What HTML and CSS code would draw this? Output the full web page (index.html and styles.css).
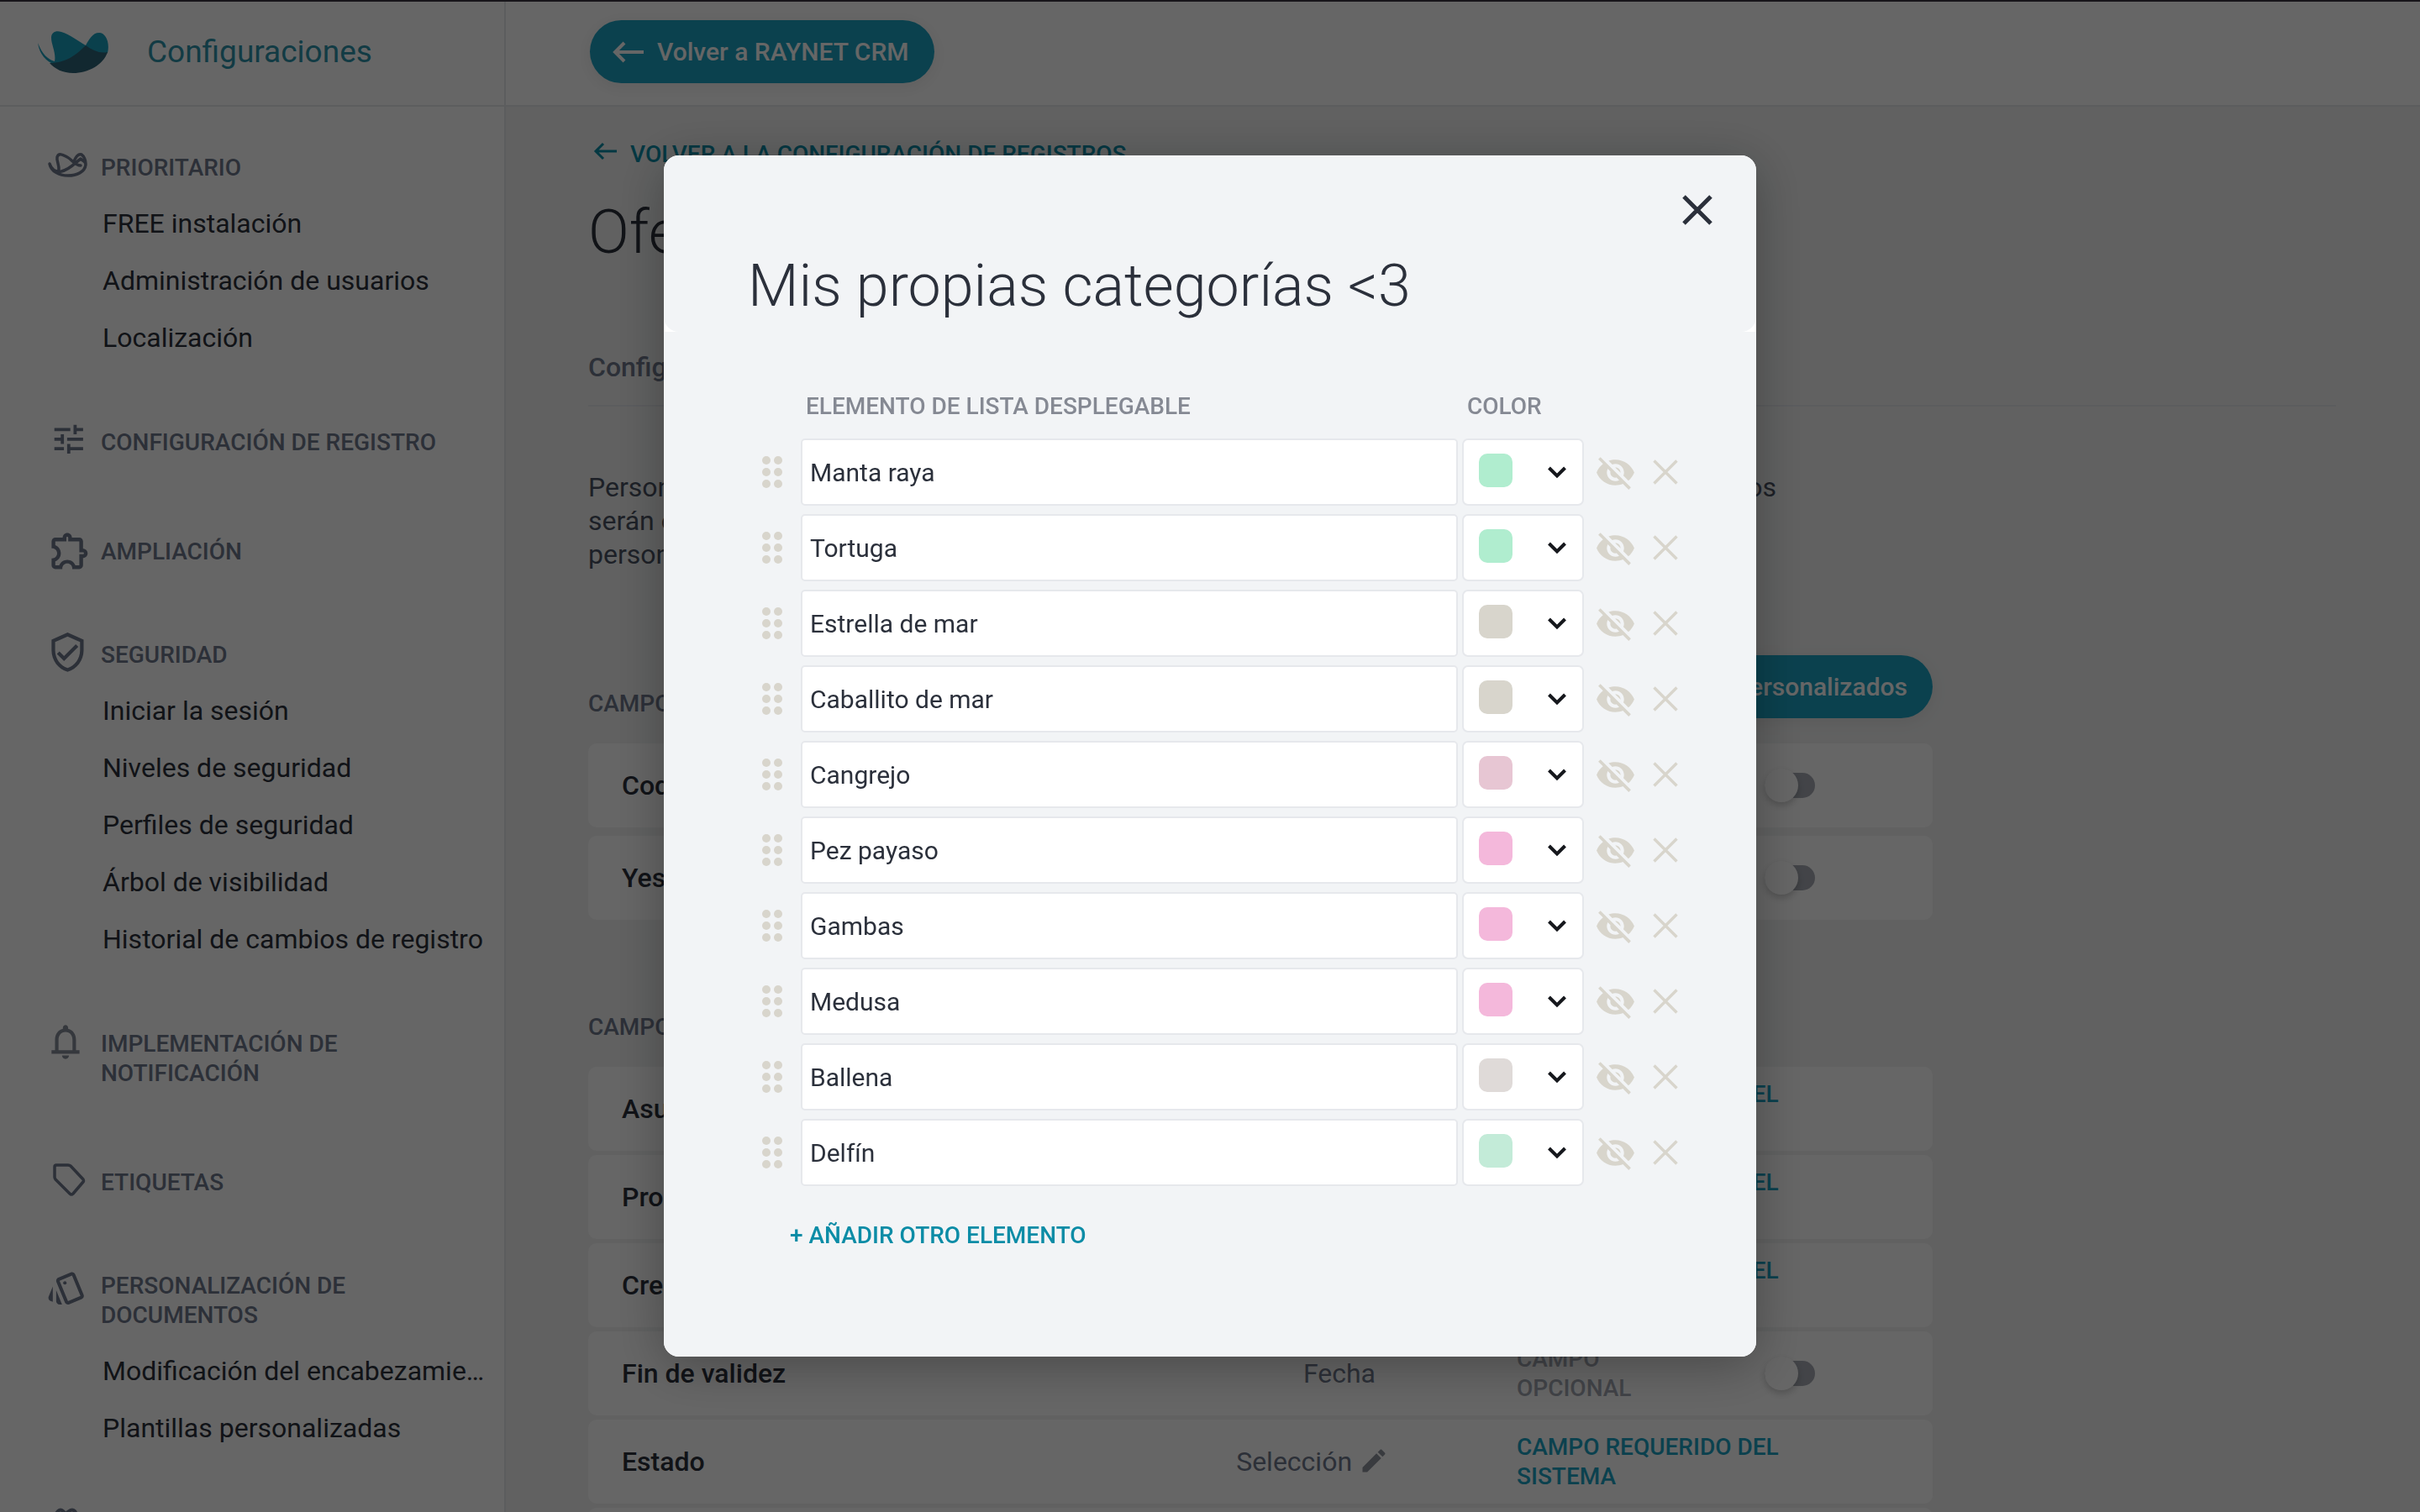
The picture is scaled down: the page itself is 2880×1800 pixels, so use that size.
FILE: index.html
```html
<!DOCTYPE html>
<html lang="es">
<head>
    <meta charset="UTF-8">
    <meta name="viewport" content="width=device-width, initial-scale=1.0">
    <title>Configuraciones - RAYNET CRM</title>
    <link rel="stylesheet" href="styles.css">
</head>
<body>
    <!-- Shared icons -->
    <svg class="sprite" aria-hidden="true">
        <symbol id="icon-drag" viewBox="0 0 24 38">
            <circle cx="5" cy="5" r="5"/><circle cx="19" cy="5" r="5"/>
            <circle cx="5" cy="19" r="5"/><circle cx="19" cy="19" r="5"/>
            <circle cx="5" cy="33" r="5"/><circle cx="19" cy="33" r="5"/>
        </symbol>
        <symbol id="icon-chevron" viewBox="0 0 24 16">
            <path d="M2.500 3l9.500 9.500L21.500 3" fill="none" stroke="currentColor" stroke-width="4"/>
        </symbol>
        <symbol id="icon-hide" viewBox="0 0 24 24">
            <path d="M12 7c2.760 0 5 2.240 5 5 0 .65-.13 1.260-.36 1.830l2.920 2.920c1.510-1.260 2.700-2.890 3.430-4.750-1.730-4.390-6-7.500-11-7.500-1.400 0-2.740.25-3.980.7l2.160 2.160C10.740 7.130 11.350 7 12 7zM2 4.270l2.280 2.280.46.46C3.080 8.300 1.780 10.020 1 12c1.730 4.390 6 7.500 11 7.500 1.550 0 3.030-.3 4.380-.84l.42.42L19.730 22 21 20.730 3.270 3 2 4.270zM7.530 9.800l1.550 1.550c-.05.21-.08.43-.08.65 0 1.660 1.340 3 3 3 .22 0 .44-.03.65-.08l1.550 1.550c-.67.33-1.410.53-2.200.53-2.760 0-5-2.240-5-5 0-.79.2-1.530.53-2.200zm4.310-.78l3.150 3.150.02-.16c0-1.660-1.340-3-3-3l-.17.01z"/>
        </symbol>
        <symbol id="icon-close" viewBox="0 0 30 30">
            <path d="M1.500 1.500l27 27M28.500 1.500l-27 27" fill="none" stroke="currentColor" stroke-width="3.500"/>
        </symbol>
    </svg>

    <div class="app">
        <aside class="sidebar">
            <div class="sidebar-header">
                <svg class="logo" viewBox="0 0 84 50" aria-hidden="true">
                    <path fill="#1ba0bf" d="M0 14C5 27 12 34 20 36C22 26 16 16 16 8C16 1 22-1 28 1C38 4 48 12 57 17C61 10 65 2 73 2C81 2 86 14 83 26L60 40L20 40C10 36 2 28 0 14Z"/>
                    <path fill="#2f6478" d="M14 38C34 38 46 28 57 17C65 23 74 27 83 25C78 40 60 50 42 50C30 50 20 45 14 38Z"/>
                </svg>
                <span class="sidebar-title">Configuraciones</span>
            </div>
            <nav class="sidebar-nav">
                <section class="nav-group">
                    <h2 class="nav-heading">
                        <svg viewBox="0 0 50 50"><path d="M4 23C7 31 12 33 18 32C28 30 34 22 41 17C45 21 47 20 47 24C46 33 36 37 26 37C15 37 6 32 4 23ZM15 32C16 24 12 20 13 15C15 9 21 13 25 15C31 18 34 25 41 25M33 20C36 13 39 11 42 12C45 14 47 19 47 23" fill="none" stroke="currentColor" stroke-width="3.500" stroke-linecap="round" stroke-linejoin="round"/></svg>
                        <span>PRIORITARIO</span>
                    </h2>
                    <ul>
                        <li><a href="#">FREE instalación</a></li>
                        <li><a href="#">Administración de usuarios</a></li>
                        <li><a href="#">Localización</a></li>
                    </ul>
                </section>
                <section class="nav-group nav-group-wide">
                    <h2 class="nav-heading">
                        <svg viewBox="0 0 50 50"><path transform="translate(4 1) scale(1.900)" d="M3 17v2h6v-2H3zM3 5v2h10V5H3zm10 16v-2h8v-2h-8v-2h-2v6h2zM7 9v2H3v2h4v2h2V9H7zm14 4v-2H11v2h10zm-6-4h2V7h4V5h-4V3h-2v6z"/></svg>
                        <span>CONFIGURACIÓN DE REGISTRO</span>
                    </h2>
                </section>
                <section class="nav-group">
                    <h2 class="nav-heading">
                        <svg viewBox="0 0 50 50"><path transform="translate(2 0) scale(2.200)" d="M10.500 4.500c.28 0 .5.22.5.5v2h6v6h2c.28 0 .5.22.5.5s-.22.5-.5.5h-2v6h-2.120c-.68-1.750-2.390-3-4.380-3s-3.700 1.250-4.380 3H4v-2.120c1.750-.68 3-2.390 3-4.380 0-1.990-1.240-3.700-2.990-4.380L4 7h6V5c0-.28.22-.5.5-.5m0-2C9.120 2.500 8 3.620 8 5H4c-1.100 0-1.990.9-1.990 2v3.800h.29c1.490 0 2.700 1.210 2.700 2.700s-1.210 2.700-2.700 2.700H2V20c0 1.100.9 2 2 2h3.800v-.3c0-1.490 1.210-2.700 2.700-2.700s2.700 1.210 2.700 2.700v.3H17c1.100 0 2-.9 2-2v-4c1.380 0 2.500-1.120 2.500-2.500S20.380 11 19 11V7c0-1.100-.9-2-2-2h-4c0-1.380-1.120-2.500-2.500-2.500z"/></svg>
                        <span>AMPLIACIÓN</span>
                    </h2>
                </section>
                <section class="nav-group">
                    <h2 class="nav-heading">
                        <svg viewBox="0 0 50 50"><path transform="translate(0 -1) scale(2.120)" d="M12 1L3 5v6c0 5.550 3.840 10.740 9 12 5.160-1.260 9-6.450 9-12V5l-9-4zm7 10c0 4.520-2.980 8.690-7 9.930-4.020-1.240-7-5.410-7-9.930V6.300l7-3.110 7 3.110V11zm-11.590.59L6 13l4 4 8-8-1.410-1.420L10 14.170z"/></svg>
                        <span>SEGURIDAD</span>
                    </h2>
                    <ul>
                        <li><a href="#">Iniciar la sesión</a></li>
                        <li><a href="#">Niveles de seguridad</a></li>
                        <li><a href="#">Perfiles de seguridad</a></li>
                        <li><a href="#">Árbol de visibilidad</a></li>
                        <li><a href="#">Historial de cambios de registro</a></li>
                    </ul>
                </section>
                <section class="nav-group nav-group-wide">
                    <h2 class="nav-heading">
                        <svg class="icon-light" viewBox="0 0 50 50"><path transform="translate(-2 0) scale(2.080)" d="M12 22c1.100 0 2-.9 2-2h-4c0 1.100.9 2 2 2zm6-6v-5c0-3.070-1.630-5.640-4.500-6.320V4c0-.83-.67-1.500-1.500-1.500s-1.500.67-1.500 1.500v.68C7.640 5.360 6 7.920 6 11v6H4v2h16v-2h-2v-1zm-2 1H8v-6c0-2.480 1.510-4.500 4-4.500s4 2.020 4 4.500v6z"/></svg>
                        <span>IMPLEMENTACIÓN DE NOTIFICACIÓN</span>
                    </h2>
                </section>
                <section class="nav-group">
                    <h2 class="nav-heading">
                        <svg viewBox="0 0 50 50"><path d="M12 7H26Q28 7 29 8L44 24Q45 26 44 27L32 41Q30 43 28 41L11 24Q10 23 10 21V9Q10 7 12 7Z" fill="none" stroke="currentColor" stroke-width="3.500" stroke-linejoin="round"/></svg>
                        <span>ETIQUETAS</span>
                    </h2>
                </section>
                <section class="nav-group">
                    <h2 class="nav-heading">
                        <svg viewBox="0 0 50 50"><g transform="translate(0 6) scale(2.020)"><path d="M2.530 19.650l1.340.56v-9.030l-2.430 5.860c-.41 1.020.08 2.190 1.090 2.610zm19.500-3.700L17.070 3.980c-.31-.75-1.040-1.210-1.810-1.230-.26 0-.53.04-.79.15L7.100 5.950c-.75.31-1.210 1.030-1.230 1.800-.01.27.04.54.15.8l4.960 11.970c.31.76 1.050 1.220 1.830 1.230.26 0 .52-.05.77-.15l7.360-3.050c1.020-.42 1.510-1.590 1.090-2.600zm-9.200 3.800L7.870 7.790l7.350-3.040h.01l4.950 11.950-7.350 3.050zM5.880 19.750c0 1.100.9 2 2 2h1.450l-3.450-8.340v6.340z"/><circle cx="11" cy="9" r="1"/></g></svg>
                        <span>PERSONALIZACIÓN DE DOCUMENTOS</span>
                    </h2>
                    <ul>
                        <li><a href="#">Modificación del encabezamiento</a></li>
                        <li><a href="#">Plantillas personalizadas</a></li>
                    </ul>
                </section>
                <section class="nav-group">
                    <h2 class="nav-heading">
                        <svg viewBox="0 0 50 50"><path d="M4 14L14 2Q17-1 20 2L23 5L27 2Q31-1 34 2L42 14M16 8L23 5L30 12" fill="none" stroke="currentColor" stroke-width="4"/></svg>
                    </h2>
                </section>
            </nav>
        </aside>

        <main class="main">
            <header class="topbar">
                <button type="button" class="btn">
                    <svg viewBox="0 0 38 26" aria-hidden="true"><path d="M38 13H4M15 2L4 13L15 24" fill="none" stroke="currentColor" stroke-width="4"/></svg>
                    Volver a RAYNET CRM
                </button>
            </header>

            <div class="content">
                <a href="#" class="back-link">
                    <svg viewBox="0 0 28 22" aria-hidden="true"><path d="M28 11H3M12 2L3 11L12 20" fill="none" stroke="currentColor" stroke-width="3"/></svg>
                    VOLVER A LA CONFIGURACIÓN DE REGISTROS
                </a>
                <h1>Ofertas</h1>
                <div class="tabs"><a href="#">Configuración</a></div>
                <p class="intro">
                    Personalice los campos según las necesidades de su empresa. Los campos que aquí haya elegidos<br>
                    serán obligatorios al crear un registro nuevo. También puede crear sus propios campos<br>
                    personalizados.
                </p>

                <div class="section-head">
                    <h3>CAMPOS PERSONALIZADOS</h3>
                    <button type="button" class="btn">Gestionar campos personalizados</button>
                </div>
                <table class="fields fields-custom">
                    <tbody>
                        <tr>
                            <th scope="row">Codigo</th>
                            <td class="type"></td>
                            <td class="status"></td>
                            <td><input type="checkbox" class="toggle" aria-label="Codigo"></td>
                        </tr>
                        <tr>
                            <th scope="row">Yes/No</th>
                            <td class="type"></td>
                            <td class="status"></td>
                            <td><input type="checkbox" class="toggle" aria-label="Yes/No"></td>
                        </tr>
                    </tbody>
                </table>

                <div class="section-head section-head-next">
                    <h3>CAMPOS ESTÁNDAR</h3>
                </div>
                <table class="fields">
                    <tbody>
                        <tr>
                            <th scope="row">Asunto</th>
                            <td class="type"><span>Texto</span></td>
                            <td class="status required">CAMPO REQUERIDO DEL<br>SISTEMA</td>
                            <td></td>
                        </tr>
                        <tr>
                            <th scope="row">Propietario</th>
                            <td class="type"><span>Usuario</span></td>
                            <td class="status required">CAMPO REQUERIDO DEL<br>SISTEMA</td>
                            <td></td>
                        </tr>
                        <tr>
                            <th scope="row">Creado</th>
                            <td class="type"><span>Fecha</span></td>
                            <td class="status required">CAMPO REQUERIDO DEL<br>SISTEMA</td>
                            <td></td>
                        </tr>
                        <tr>
                            <th scope="row">Fin de validez</th>
                            <td class="type"><span>Fecha</span></td>
                            <td class="status">CAMPO<br>OPCIONAL</td>
                            <td><input type="checkbox" class="toggle" aria-label="Fin de validez"></td>
                        </tr>
                        <tr>
                            <th scope="row">Estado</th>
                            <td class="type">Selección <svg viewBox="0 0 24 24" aria-hidden="true"><path d="M3 17.250V21h3.750L17.810 9.940l-3.750-3.750L3 17.250zM20.710 7.040c.39-.39.39-1.020 0-1.410l-2.340-2.340c-.39-.39-1.020-.39-1.410 0l-1.830 1.830 3.750 3.750 1.830-1.830z"/></svg></td>
                            <td class="status required">CAMPO REQUERIDO DEL<br>SISTEMA</td>
                            <td></td>
                        </tr>
                        <tr>
                            <th scope="row"></th>
                            <td class="type"></td>
                            <td class="status"></td>
                            <td></td>
                        </tr>
                    </tbody>
                </table>
            </div>
        </main>
    </div>

    <div class="overlay">
        <div class="modal" role="dialog" aria-modal="true" aria-labelledby="modalTitle">
            <div class="modal-header">
                <button type="button" class="modal-close" aria-label="Cerrar">
                    <svg viewBox="0 0 36 36"><path d="M2 2l32 32M34 2L2 34" fill="none" stroke="currentColor" stroke-width="5"/></svg>
                </button>
                <h2 id="modalTitle">Mis propias categorías &lt;3</h2>
            </div>
            <form class="modal-body">
                <div class="item-row item-labels">
                    <span></span>
                    <span id="labelItem" class="label-item">ELEMENTO DE LISTA DESPLEGABLE</span>
                    <span id="labelColor" class="label-color">COLOR</span>
                </div>
                <div class="item-row">
                    <svg class="drag"><use href="#icon-drag"/></svg>
                    <input type="text" value="Manta raya" aria-labelledby="labelItem">
                    <div class="color-picker"><span class="swatch mint"></span><svg><use href="#icon-chevron"/></svg><select aria-labelledby="labelColor"><option>Verde</option></select></div>
                    <button type="button" class="hide-btn" aria-label="Ocultar"><svg><use href="#icon-hide"/></svg></button>
                    <button type="button" class="remove-btn" aria-label="Eliminar"><svg><use href="#icon-close"/></svg></button>
                </div>
                <div class="item-row">
                    <svg class="drag"><use href="#icon-drag"/></svg>
                    <input type="text" value="Tortuga" aria-labelledby="labelItem">
                    <div class="color-picker"><span class="swatch mint"></span><svg><use href="#icon-chevron"/></svg><select aria-labelledby="labelColor"><option>Verde</option></select></div>
                    <button type="button" class="hide-btn" aria-label="Ocultar"><svg><use href="#icon-hide"/></svg></button>
                    <button type="button" class="remove-btn" aria-label="Eliminar"><svg><use href="#icon-close"/></svg></button>
                </div>
                <div class="item-row">
                    <svg class="drag"><use href="#icon-drag"/></svg>
                    <input type="text" value="Estrella de mar" aria-labelledby="labelItem">
                    <div class="color-picker"><span class="swatch sand"></span><svg><use href="#icon-chevron"/></svg><select aria-labelledby="labelColor"><option>Arena</option></select></div>
                    <button type="button" class="hide-btn" aria-label="Ocultar"><svg><use href="#icon-hide"/></svg></button>
                    <button type="button" class="remove-btn" aria-label="Eliminar"><svg><use href="#icon-close"/></svg></button>
                </div>
                <div class="item-row">
                    <svg class="drag"><use href="#icon-drag"/></svg>
                    <input type="text" value="Caballito de mar" aria-labelledby="labelItem">
                    <div class="color-picker"><span class="swatch sand"></span><svg><use href="#icon-chevron"/></svg><select aria-labelledby="labelColor"><option>Arena</option></select></div>
                    <button type="button" class="hide-btn" aria-label="Ocultar"><svg><use href="#icon-hide"/></svg></button>
                    <button type="button" class="remove-btn" aria-label="Eliminar"><svg><use href="#icon-close"/></svg></button>
                </div>
                <div class="item-row">
                    <svg class="drag"><use href="#icon-drag"/></svg>
                    <input type="text" value="Cangrejo" aria-labelledby="labelItem">
                    <div class="color-picker"><span class="swatch rose"></span><svg><use href="#icon-chevron"/></svg><select aria-labelledby="labelColor"><option>Rosa viejo</option></select></div>
                    <button type="button" class="hide-btn" aria-label="Ocultar"><svg><use href="#icon-hide"/></svg></button>
                    <button type="button" class="remove-btn" aria-label="Eliminar"><svg><use href="#icon-close"/></svg></button>
                </div>
                <div class="item-row">
                    <svg class="drag"><use href="#icon-drag"/></svg>
                    <input type="text" value="Pez payaso" aria-labelledby="labelItem">
                    <div class="color-picker"><span class="swatch pink"></span><svg><use href="#icon-chevron"/></svg><select aria-labelledby="labelColor"><option>Rosa</option></select></div>
                    <button type="button" class="hide-btn" aria-label="Ocultar"><svg><use href="#icon-hide"/></svg></button>
                    <button type="button" class="remove-btn" aria-label="Eliminar"><svg><use href="#icon-close"/></svg></button>
                </div>
                <div class="item-row">
                    <svg class="drag"><use href="#icon-drag"/></svg>
                    <input type="text" value="Gambas" aria-labelledby="labelItem">
                    <div class="color-picker"><span class="swatch pink"></span><svg><use href="#icon-chevron"/></svg><select aria-labelledby="labelColor"><option>Rosa</option></select></div>
                    <button type="button" class="hide-btn" aria-label="Ocultar"><svg><use href="#icon-hide"/></svg></button>
                    <button type="button" class="remove-btn" aria-label="Eliminar"><svg><use href="#icon-close"/></svg></button>
                </div>
                <div class="item-row">
                    <svg class="drag"><use href="#icon-drag"/></svg>
                    <input type="text" value="Medusa" aria-labelledby="labelItem">
                    <div class="color-picker"><span class="swatch pink"></span><svg><use href="#icon-chevron"/></svg><select aria-labelledby="labelColor"><option>Rosa</option></select></div>
                    <button type="button" class="hide-btn" aria-label="Ocultar"><svg><use href="#icon-hide"/></svg></button>
                    <button type="button" class="remove-btn" aria-label="Eliminar"><svg><use href="#icon-close"/></svg></button>
                </div>
                <div class="item-row">
                    <svg class="drag"><use href="#icon-drag"/></svg>
                    <input type="text" value="Ballena" aria-labelledby="labelItem">
                    <div class="color-picker"><span class="swatch stone"></span><svg><use href="#icon-chevron"/></svg><select aria-labelledby="labelColor"><option>Piedra</option></select></div>
                    <button type="button" class="hide-btn" aria-label="Ocultar"><svg><use href="#icon-hide"/></svg></button>
                    <button type="button" class="remove-btn" aria-label="Eliminar"><svg><use href="#icon-close"/></svg></button>
                </div>
                <div class="item-row">
                    <svg class="drag"><use href="#icon-drag"/></svg>
                    <input type="text" value="Delfín" aria-labelledby="labelItem">
                    <div class="color-picker"><span class="swatch seafoam"></span><svg><use href="#icon-chevron"/></svg><select aria-labelledby="labelColor"><option>Verde agua</option></select></div>
                    <button type="button" class="hide-btn" aria-label="Ocultar"><svg><use href="#icon-hide"/></svg></button>
                    <button type="button" class="remove-btn" aria-label="Eliminar"><svg><use href="#icon-close"/></svg></button>
                </div>
                <button type="button" class="add-item">+ AÑADIR OTRO ELEMENTO</button>
            </form>
        </div>
    </div>
</body>
</html>
```
FILE: styles.css
```css
:root {
    --primary: #1ca3c4;
    --link: #0b8ca6;
    --text: #2b303b;
    --text-soft: #4a5262;
    --heading: #6f788c;
    --muted: #a3a8b3;
    --icon: #d8d5cc;
    --border: #e6e8ec;
    --page: #f2f3f3;
    --panel: #f2f4f6;
}

* {
    box-sizing: border-box;
}

body {
    margin: 0;
    font-family: Roboto, "Liberation Sans", sans-serif;
    font-size: 32px;
    color: var(--text);
    background: #fff;
    border-top: 2px solid #3a3542;
    height: 100vh;
    overflow: hidden;
}

h1, h2, h3, p, ul {
    margin: 0;
    padding: 0;
}

ul {
    list-style: none;
}

a {
    color: inherit;
    text-decoration: none;
}

button {
    font-family: inherit;
    border: none;
    background: none;
    padding: 0;
    cursor: pointer;
}

svg {
    display: block;
    fill: currentColor;
    flex: none;
}

.sprite {
    display: none;
}

.app {
    display: grid;
    grid-template-columns: 602px 1fr;
    height: 100%;
}

/* Sidebar */
.sidebar {
    background: #fff;
    border-right: 2px solid var(--border);
    overflow: hidden;
}

.sidebar-header {
    display: flex;
    align-items: center;
    height: 125px;
    padding: 0 0 4px 45px;
    border-bottom: 2px solid var(--border);
}

.logo {
    width: 84px;
    height: 50px;
    margin-right: 46px;
}

.sidebar-title {
    font-size: 37px;
    color: #2f93ab;
}

.sidebar-nav {
    padding-top: 55px;
}

.nav-group {
    margin-bottom: 73px;
}

.nav-group-wide {
    margin-bottom: 80px;
}

.nav-heading {
    display: flex;
    gap: 15px;
    min-height: 50px;
    padding: 0 60px 15px 55px;
    font-size: 28px;
    line-height: 35px;
    font-weight: 500;
    color: var(--heading);
}

.nav-heading svg {
    width: 50px;
    height: 50px;
    margin: -10px 0 -15px;
    overflow: visible;
}

.nav-heading .icon-light {
    color: #868c98;
}

.nav-group li {
    padding: 0 10px 0 122px;
}

.nav-group li a {
    display: block;
    line-height: 68px;
    white-space: nowrap;
    overflow: hidden;
    text-overflow: ellipsis;
}

/* Main area */
.main {
    background: var(--page);
    overflow: hidden;
}

.topbar {
    display: flex;
    align-items: center;
    height: 125px;
    padding: 0 0 4px 100px;
    background: #fff;
    border-bottom: 2px solid var(--border);
}

.btn {
    display: flex;
    align-items: center;
    gap: 16px;
    height: 75px;
    padding: 0 30px 0 26px;
    border-radius: 38px;
    font-size: 30px;
    font-weight: 500;
    color: #fff;
    background: var(--primary);
    box-shadow: 0 4px 20px rgba(0, 0, 0, 0.08);
}

.btn svg {
    width: 38px;
    height: 26px;
}

.content {
    padding: 39px 100px 0 98px;
}

.back-link {
    display: flex;
    align-items: center;
    gap: 16px;
    padding-left: 6px;
    font-size: 28px;
    line-height: 35px;
    font-weight: 500;
    color: var(--link);
}

.back-link svg {
    width: 28px;
    height: 22px;
    margin-bottom: 8px;
}

h1 {
    margin-top: 34px;
    font-size: 72px;
    line-height: 84px;
    font-weight: 300;
}

.tabs {
    margin-top: 98px;
    padding-bottom: 25px;
    line-height: 40px;
    font-weight: 500;
    color: var(--heading);
    border-bottom: 2px solid var(--border);
}

.intro {
    margin-top: 76px;
    line-height: 40px;
    color: var(--text-soft);
}

.section-head {
    display: flex;
    align-items: flex-end;
    justify-content: space-between;
    max-width: 1600px;
    margin-top: 100px;
}

.section-head h3 {
    font-size: 28px;
    line-height: 35px;
    font-weight: 500;
    color: var(--heading);
}

.fields {
    width: 100%;
    max-width: 1600px;
    margin-top: 25px;
    table-layout: fixed;
    border-collapse: separate;
    border-spacing: 0 5px;
}

.fields-custom {
    margin-top: 20px;
    border-spacing: 0 10px;
}

.fields th,
.fields td {
    height: 100px;
    padding: 0;
    text-align: left;
    background: #fff;
}

.fields th {
    width: 600px;
    padding-left: 40px;
    font-weight: 500;
    border-radius: 10px 0 0 10px;
}

.fields td:last-child {
    border-radius: 0 10px 10px 0;
}

.fields .type {
    width: 505px;
    padding-right: 152px;
    text-align: right;
    color: var(--heading);
}

.type span {
    padding-right: 16px;
}

.type svg {
    display: inline-block;
    width: 36px;
    height: 36px;
    vertical-align: -6px;
    color: #8f949e;
}

.fields .status {
    width: 295px;
    font-size: 28px;
    line-height: 35px;
    font-weight: 500;
    white-space: nowrap;
    color: var(--muted);
}

.fields .status.required {
    color: var(--primary);
}

.toggle {
    appearance: none;
    display: block;
    position: relative;
    width: 60px;
    height: 30px;
    margin: 0;
    border-radius: 15px;
    background: #a7abb4;
}

.toggle::before {
    content: "";
    position: absolute;
    top: -5px;
    left: 0;
    width: 40px;
    height: 40px;
    border-radius: 50%;
    background: #fff;
    box-shadow: 0 4px 8px rgba(0, 0, 0, 0.2);
}

/* Modal */
.overlay {
    position: fixed;
    inset: 0;
    display: flex;
    align-items: center;
    justify-content: center;
    background: rgba(0, 0, 0, 0.6);
}

.modal {
    width: 1300px;
    border-radius: 18px;
    background: #fff;
    box-shadow: 0 10px 60px rgba(0, 0, 0, 0.3);
}

.modal-header {
    display: flex;
    flex-direction: column;
    height: 210px;
    padding: 47px 52px 0 100px;
    border-radius: 18px;
    background: var(--panel);
}

.modal-close {
    align-self: flex-end;
    color: var(--text);
}

.modal-close svg {
    width: 36px;
    height: 36px;
}

.modal-header h2 {
    margin-top: 30px;
    font-size: 70px;
    line-height: 84px;
    font-weight: 300;
}

.modal-body {
    padding: 71px 95px 127px 117px;
    border-radius: 0 0 18px 18px;
    background: var(--panel);
}

.item-row {
    display: grid;
    grid-template-columns: 41px 1fr 145px 50px 50px;
    column-gap: 5px;
    align-items: center;
    height: 80px;
    margin-bottom: 10px;
}

.item-labels {
    height: 35px;
    margin-bottom: 21px;
    font-size: 28px;
    line-height: 35px;
    font-weight: 500;
    color: #858993;
}

.label-item,
.label-color {
    padding-left: 6px;
}

.drag {
    width: 24px;
    height: 38px;
    color: var(--icon);
}

.item-row input {
    width: 100%;
    height: 80px;
    padding: 0 9px;
    border: 2px solid var(--border);
    border-radius: 5px;
    font-family: inherit;
    font-size: 30px;
    color: var(--text);
    background: #fff;
}

.color-picker {
    position: relative;
    display: flex;
    align-items: center;
    justify-content: space-between;
    height: 80px;
    padding: 0 18px;
    border: 2px solid var(--border);
    border-radius: 7px;
    background: #fff;
}

.color-picker svg {
    width: 24px;
    height: 16px;
    color: #15171c;
}

.color-picker select {
    position: absolute;
    inset: 0;
    width: 100%;
    opacity: 0;
    cursor: pointer;
}

.swatch {
    width: 40px;
    height: 40px;
    margin-bottom: 5px;
    border-radius: 10px;
}

.mint { background: #b0edcf; }
.sand { background: #d8d5cc; }
.rose { background: #e7c6d3; }
.pink { background: #f4b8db; }
.stone { background: #dfdad8; }
.seafoam { background: #c3ebd8; }

.hide-btn,
.remove-btn {
    display: flex;
    justify-content: center;
    color: var(--icon);
}

.hide-btn {
    padding-left: 14px;
}

.hide-btn svg {
    width: 49px;
    height: 49px;
}

.remove-btn {
    padding-left: 24px;
}

.remove-btn svg {
    width: 30px;
    height: 30px;
}

.add-item {
    display: block;
    margin-top: 41px;
    margin-left: 33px;
    font-size: 28px;
    line-height: 35px;
    font-weight: 500;
    color: var(--link);
}
```
